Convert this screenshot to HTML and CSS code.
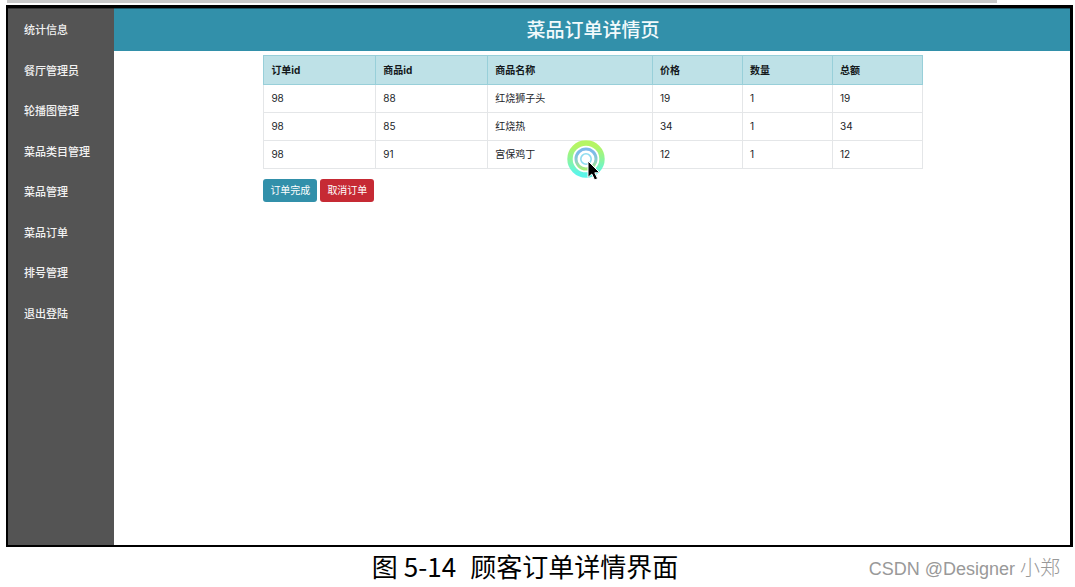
FILE: index.html
```html
<!DOCTYPE html>
<html lang="zh-CN">
<head>
<meta charset="utf-8">
<title>菜品订单详情页</title>
<link rel="stylesheet" href="styles.css">
</head>
<body>
<div class="page">
  <div class="top-rule"></div>
  <div class="frame">
    <nav class="sidebar">
      <a href="#">统计信息</a>
      <a href="#">餐厅管理员</a>
      <a href="#">轮播图管理</a>
      <a href="#">菜品类目管理</a>
      <a href="#">菜品管理</a>
      <a href="#">菜品订单</a>
      <a href="#">排号管理</a>
      <a href="#">退出登陆</a>
    </nav>
    <main class="main">
      <header class="title-bar"><h1>菜品订单详情页</h1></header>
      <section class="content">
        <table class="orders">
          <colgroup><col class="col-id"><col class="col-id"><col class="col-name"><col><col><col></colgroup>
          <thead>
            <tr><th>订单id</th><th>商品id</th><th>商品名称</th><th>价格</th><th>数量</th><th>总额</th></tr>
          </thead>
          <tbody>
            <tr><td>98</td><td>88</td><td>红烧狮子头</td><td>19</td><td>1</td><td>19</td></tr>
            <tr><td>98</td><td>85</td><td>红烧热</td><td>34</td><td>1</td><td>34</td></tr>
            <tr><td>98</td><td>91</td><td>宫保鸡丁</td><td>12</td><td>1</td><td>12</td></tr>
          </tbody>
        </table>
        <div class="actions">
          <button type="button" class="btn btn-done">订单完成</button>
          <button type="button" class="btn btn-cancel">取消订单</button>
        </div>
        <svg class="pointer" width="44" height="44" viewBox="0 0 44 44" aria-hidden="true">
          <defs>
            <linearGradient id="ring" x1="0" y1="0" x2="0" y2="1">
              <stop offset="0.1" stop-color="#b5f564"/>
              <stop offset="0.5" stop-color="#8df59a"/>
              <stop offset="0.95" stop-color="#5cf5e8"/>
            </linearGradient>
            <linearGradient id="inner" x1="0" y1="0" x2="0" y2="1">
              <stop offset="0.2" stop-color="#7dbbe9"/>
              <stop offset="0.6" stop-color="#8fcfc8"/>
              <stop offset="1" stop-color="#a6ee78"/>
            </linearGradient>
          </defs>
          <circle cx="20" cy="20" r="18.7" fill="#fff"/>
          <circle cx="20" cy="20" r="16" fill="none" stroke="url(#ring)" stroke-width="5.4"/>
          <circle cx="20" cy="20" r="10" fill="none" stroke="url(#inner)" stroke-width="3"/>
          <circle cx="20" cy="20" r="5.2" fill="none" stroke="#8edcf0" stroke-width="1.6"/>
          <path d="M22 22v16.4l3.8-3.4 2.8 6 3-1.4-2.8-5.8h5z" fill="#000" stroke="#fff" stroke-width="1" stroke-linejoin="round"/>
        </svg>
      </section>
    </main>
  </div>
  <footer class="caption">
    <p class="figure-title"><span>图</span><span>5-14</span><span class="name">顾客订单详情界面</span></p>
    <p class="watermark">CSDN @Designer <span class="author">小郑</span></p>
  </footer>
</div>
</body>
</html>
```
FILE: styles.css
```css
* {
  box-sizing: border-box;
}

body {
  margin: 0;
  background: #fff;
  font-family: Inter, "Noto Sans CJK SC", sans-serif;
}

.page {
  display: flex;
  flex-direction: column;
  min-height: 100vh;
}

.top-rule {
  height: 3px;
  margin: 0 78px 2px 7px;
  background: #c8c8c8;
}

.frame {
  display: flex;
  flex: 1;
  margin: 0 2px 0 6px;
  border: solid #000;
  border-width: 3px 3px 2px 2px;
}

.sidebar {
  display: grid;
  grid-template-rows: repeat(8, 1fr);
  align-self: stretch;
  width: 106px;
  flex: none;
  padding-bottom: 212px;
  background: #545454;
  border-top: 1px solid #333;
}

.sidebar a {
  display: flex;
  align-items: center;
  padding-left: 16px;
  color: #f2f2f2;
  font-size: 11px;
  font-weight: 500;
  text-decoration: none;
}

.main {
  flex: 1;
}

.title-bar {
  display: flex;
  align-items: center;
  justify-content: center;
  height: 43px;
  padding: 2px 0 0 2px;
  background: #3290aa;
  border-top: 1px solid #1c5565;
}

.title-bar h1 {
  margin: 0;
  color: #f2fafc;
  font-size: 19px;
  font-weight: 500;
  line-height: 24px;
}

.main {
  display: flex;
  flex-direction: column;
}

.content {
  position: relative;
  width: 69%;
  margin: 4px 147px 0 auto;
}

.orders {
  width: 100%;
  border-collapse: collapse;
  table-layout: fixed;
  color: #212529;
  font-size: 10px;
  line-height: 14px;
}

.orders .col-id {
  width: 17%;
}

.orders .col-name {
  width: 25%;
}

.orders th,
.orders td {
  padding: 6px 7px 7px;
  border: 1px solid #e4e6e8;
  text-align: left;
  font-weight: 400;
}

.orders th {
  padding: 7px;
  border-color: #98cfd9;
  background: #bee1e7;
  color: #14191c;
  font-weight: 700;
}

.actions {
  display: flex;
  gap: 3px;
  margin-top: 10px;
}

.btn {
  padding: 4px 7px;
  border: 0;
  border-radius: 3px;
  color: #fff;
  font-family: inherit;
  font-size: 10px;
  line-height: 15px;
}

.btn-done {
  background: #3290aa;
}

.btn-cancel {
  background: #c62a34;
}

.pointer {
  position: absolute;
  left: 303px;
  top: 84px;
}

.caption {
  display: grid;
  grid-template-columns: 1fr auto 1fr;
  align-items: center;
  height: 40px;
  padding: 0 15px 2px 0;
}

.figure-title {
  display: flex;
  grid-column: 2;
  gap: 6px;
  margin: 0;
  padding-right: 10px;
  color: #000;
  font-family: "Noto Sans CJK SC", sans-serif;
  font-size: 26px;
  line-height: 38px;
}

.figure-title .name {
  margin-left: 8px;
}

.watermark {
  margin: 0;
  color: #999;
  font-family: "Liberation Sans", "Noto Sans CJK SC", sans-serif;
  font-size: 18px;
  text-align: right;
  white-space: nowrap;
}

.watermark .author {
  font-size: 20px;
  font-weight: 300;
}
```
